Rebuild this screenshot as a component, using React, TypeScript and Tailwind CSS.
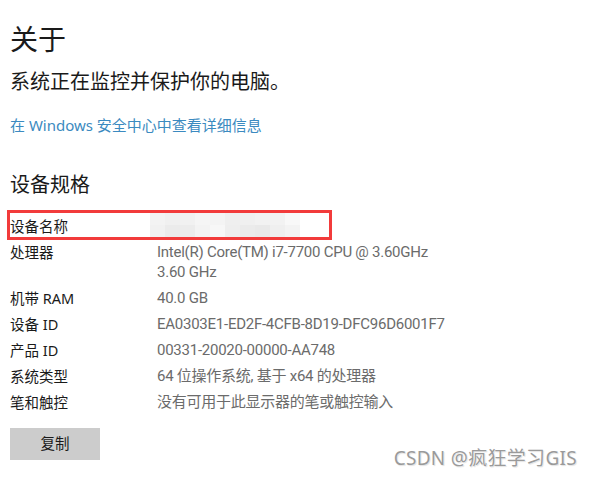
import React from "react";

const rows: { label: string; value: string[] }[] = [
  { label: "处理器", value: ["Intel(R) Core(TM) i7-7700 CPU @ 3.60GHz", "3.60 GHz"] },
  { label: "机带 RAM", value: ["40.0 GB"] },
  { label: "设备 ID", value: ["EA0303E1-ED2F-4CFB-8D19-DFC96D6001F7"] },
  { label: "产品 ID", value: ["00331-20020-00000-AA748"] },
  { label: "系统类型", value: ["64 位操作系统, 基于 x64 的处理器"] },
  { label: "笔和触控", value: ["没有可用于此显示器的笔或触控输入"] },
];

const blurTop = ["#f3f3f3", "#f0f0f0", "#f1f1f1", "#f5f5f5", "#f4f4f4", "#efefef", "#f0f0f0", "#f2f2f2", "#f2f2f2", "#f8f8f8"];
const blurBottom = ["#f1f1f1", "#ebebeb", "#ececec", "#f3f3f3", "#f7f7f7", "#eeeeee", "#ebebeb", "#e9e9e9", "#efefef", "#f3f3f3"];

export default function App() {
  return (
    <div
      className="relative w-[591px] h-[477px] bg-white overflow-hidden pl-[10px] pt-[20px] text-[#1a1a1a]"
      style={{ fontFamily: '"Noto Sans", "Noto Sans CJK SC", sans-serif' }}
    >
      <div className="text-[28px] leading-[38px]">关于</div>
      <div className="mt-[10px] text-[20px] leading-[28px]">系统正在监控并保护你的电脑。</div>
      <div className="mt-[17px] text-[15px] leading-[24px] text-[#3b8ac0]">在 Windows 安全中心中查看详细信息</div>
      <div className="mt-[34px] text-[20px] leading-[28px]">设备规格</div>

      <div className="mt-[14px] text-[14.5px] leading-[20px]">
        <div className="relative flex py-[3px]">
          <div className="w-[147px] shrink-0">设备名称</div>
          <div className="absolute left-[140px] top-0 flex flex-col">
            <div className="flex">
              {blurTop.map((c, i) => (
                <div key={i} className="w-[15px] h-[12px]" style={{ background: c }} />
              ))}
            </div>
            <div className="flex">
              {blurBottom.map((c, i) => (
                <div key={i} className="w-[15px] h-[12px]" style={{ background: c }} />
              ))}
            </div>
          </div>
          <div className="absolute left-[-3px] top-[-3px] w-[325px] h-[30px] border-[3px] border-[#f23b3b]" />
        </div>
        {rows.map((r) => (
          <div key={r.label} className="flex py-[3px]">
            <div className="w-[147px] shrink-0">{r.label}</div>
            <div
              className="text-[#6b6b6b] text-[15px] tracking-[-0.25px]"
              style={{ fontFamily: 'Roboto, "Noto Sans CJK SC", sans-serif' }}
            >
              {r.value.map((v) => (
                <div key={v}>{v}</div>
              ))}
            </div>
          </div>
        ))}
      </div>

      <button className="mt-[13px] w-[90px] h-[32px] bg-[#cccccc] text-[14.5px] text-[#1a1a1a] flex items-center justify-center">
        复制
      </button>

      <div
        className="absolute right-[14px] bottom-[8px] text-[19px] leading-[22px] tracking-[0.3px] text-[#9a9a9a]"
        style={{ textShadow: "0 0 1px #ffffff, 1px 1px 1px #e0e0e0" }}
      >
        CSDN @疯狂学习GIS
      </div>
    </div>
  );
}
